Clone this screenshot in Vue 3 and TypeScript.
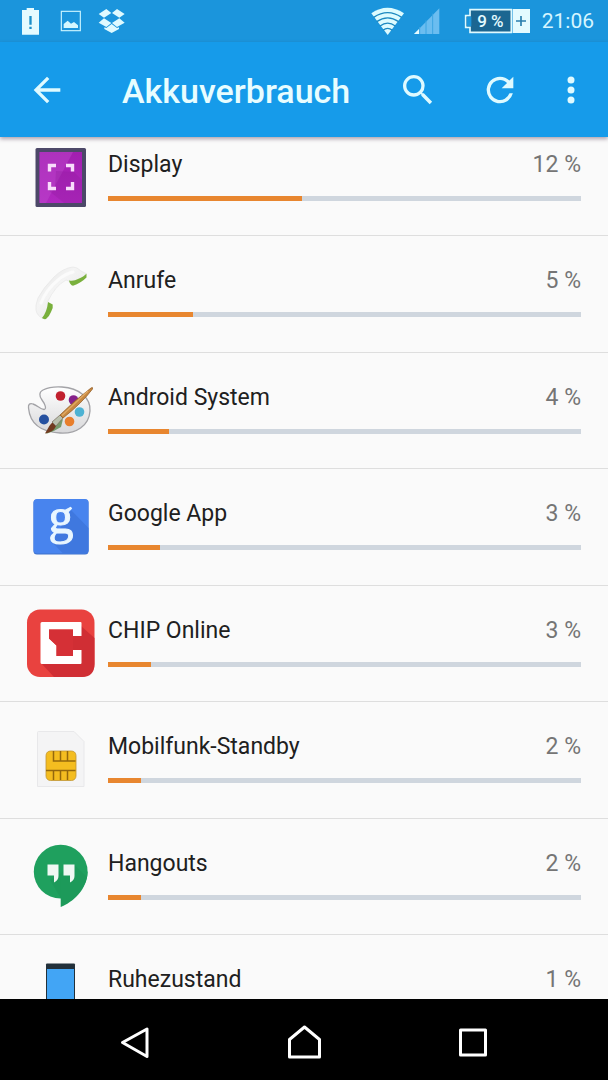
<script setup lang="ts">
interface Consumer {
  id: string
  name: string
  percent: number
  share: number
}

// share: width of the orange bar, relative to the whole track
const consumers: Consumer[] = [
  { id: 'display', name: 'Display', percent: 12, share: 41 },
  { id: 'calls', name: 'Anrufe', percent: 5, share: 18 },
  { id: 'system', name: 'Android System', percent: 4, share: 13 },
  { id: 'google', name: 'Google App', percent: 3, share: 11 },
  { id: 'chip', name: 'CHIP Online', percent: 3, share: 9 },
  { id: 'sim', name: 'Mobilfunk-Standby', percent: 2, share: 7 },
  { id: 'hangouts', name: 'Hangouts', percent: 2, share: 7 },
  { id: 'idle', name: 'Ruhezustand', percent: 1, share: 5 },
]
</script>

<template>
  <div class="screen">
    <div class="status">
      <div class="status-left">
        <svg width="19" height="29" viewBox="63 21 57 87" aria-hidden="true">
          <path d="M66 30H80V24H102V30H117V104H66Z" fill="#e4fbff" />
          <path d="M88 48h7v26h-7zM88 80h7v7h-7z" fill="#1b8fc9" />
        </svg>
        <svg class="picture" width="22" height="22" viewBox="180 30 66 66" aria-hidden="true">
          <rect x="184" y="34" width="57" height="58" fill="none" stroke="#c8f4ff" stroke-width="3.5" />
          <path d="M191 84V72L203 62L213 71L222 66L234 76V84Z" fill="#d4f7ff" />
        </svg>
        <svg width="28" height="26" viewBox="294 24 84 78" aria-hidden="true">
          <path
            d="M319 27L334 39L312 53L296 42ZM351 27L374 42L358 53L336 39ZM312 55L334 69L319 81L296 68ZM358 55L374 68L351 81L336 69ZM335 72L351 84L357 82V87L335 99L313 87V82L319 84Z"
            fill="#dffaff"
          />
        </svg>
      </div>
      <div class="status-right">
        <svg width="34" height="29" viewBox="201 24 102 87" aria-hidden="true">
          <path d="M202 43Q250 10 300 43L251 108Z" fill="#dcfbff" />
          <g fill="none" stroke="#1b88c0" stroke-width="4">
            <path d="M209 55Q251 27 293 55" />
            <path d="M218 68Q251 45 284 68" />
            <path d="M228 81Q251 64 274 81" />
            <path d="M237 94Q251 82 265 94" />
          </g>
        </svg>
        <svg class="signal" width="26" height="26" viewBox="330 27 78 78" aria-hidden="true">
          <path d="M330 105L406 28V105Z" fill="#6bbdf0" />
          <path d="M330 105L346 89V105Z" fill="#e4fbff" />
          <path d="M347 84V105M366 64V105M386 44V105" stroke="#3ba4e2" stroke-width="3" />
        </svg>
        <svg class="battery" width="67" height="26" viewBox="480 24 201 78" role="img" aria-label="Akku 9 %">
          <path d="M498 29H622V97H498V82H485V47H498Z" fill="#1b6691" stroke="#dffaff" stroke-width="5" />
          <path d="M488 50H502V79H488Z" fill="#1b95dc" />
          <rect x="626" y="27" width="52" height="72" fill="#e4fbff" />
          <path d="M636 63H666M651 48V78" stroke="#2a7fae" stroke-width="5" />
          <text x="559" y="81" text-anchor="middle" class="battery-text">9 %</text>
        </svg>
        <time class="clock">21:06</time>
      </div>
    </div>

    <header class="appbar">
      <button type="button" class="action" aria-label="Zurück">
        <svg viewBox="0 0 24 24"><path d="M20 11H7.83l5.59-5.59L12 4l-8 8 8 8 1.41-1.41L7.83 13H20v-2z" /></svg>
      </button>
      <h1>Akkuverbrauch</h1>
      <button type="button" class="action search" aria-label="Suchen">
        <svg viewBox="0 0 24 24"><path d="M15.5 14h-.79l-.28-.27A6.47 6.47 0 0 0 16 9.5 6.5 6.5 0 1 0 9.5 16c1.61 0 3.09-.59 4.23-1.57l.27.28v.79l5 4.99L20.49 19l-4.99-5zm-6 0C7.01 14 5 11.99 5 9.5S7.01 5 9.5 5 14 7.01 14 9.5 11.99 14 9.5 14z" /></svg>
      </button>
      <button type="button" class="action refresh" aria-label="Aktualisieren">
        <svg viewBox="0 0 24 24"><path d="M17.65 6.35A7.96 7.96 0 0 0 12 4a8 8 0 1 0 7.73 10h-2.08A6 6 0 1 1 12 6c1.66 0 3.14.69 4.22 1.78L13 11h7V4l-2.35 2.35z" /></svg>
      </button>
      <button type="button" class="action more" aria-label="Weitere Optionen">
        <svg viewBox="0 0 24 24"><circle cx="12" cy="6" r="2.1" /><circle cx="12" cy="12" r="2.1" /><circle cx="12" cy="18" r="2.1" /></svg>
      </button>
    </header>

    <main class="content">
      <ul class="list">
        <li v-for="item in consumers" :key="item.id" class="row">
          <svg class="icon" viewBox="0 0 80 80" aria-hidden="true">
            <g v-if="item.id === 'display'">
              <defs>
                <linearGradient id="violet" x1="0" y1="0" x2="0" y2="1">
                  <stop offset="0" stop-color="#a21fb0" />
                  <stop offset="1" stop-color="#b028c0" />
                </linearGradient>
              </defs>
              <rect x="15.5" y="10" width="50.5" height="59" rx="1.5" fill="#4c4868" />
              <rect x="19.5" y="14" width="42.5" height="51" fill="url(#violet)" />
              <path d="M19.5 14H53L26 65H19.5Z" fill="#c04fd0" opacity=".4" />
              <path d="M36 33L54 34L62 42V65H44L28 52L35 50Z" fill="#8d1a9b" opacity=".3" />
              <path d="M29.5 33.5V27.5H36M46 27.5H52.5V33.5M52.5 44V50.5H46M36 50.5H29.5V44" fill="none" stroke="#f8dcfb" stroke-width="3.4" />
            </g>

            <g v-else-if="item.id === 'calls'">
              <defs>
                <linearGradient id="handset" x1="0" y1="0" x2="1" y2="1">
                  <stop offset="0" stop-color="#e2e2e2" />
                  <stop offset=".4" stop-color="#f4f4f4" />
                  <stop offset="1" stop-color="#e4e4e4" />
                </linearGradient>
              </defs>
              <path d="M53 13Q57 13 61 17L66 19.5Q66 22 60 25Q54 28 50 27.5L46 26Q35 32 27.5 48L30 50Q28 61 23 64.5Q17 62 16 56Q15 52 18 44Q23 34 34 23Q43 14 53 13Z" fill="url(#handset)" stroke="#e4e4e4" stroke-width=".6" />
              <path d="M21 49Q26 36 38 26Q45 20 53 18" fill="none" stroke="#fbfbfb" stroke-width="3" stroke-linecap="round" />
              <path d="M49 26.5Q54 27.500 58 25Q64 22.500 66.500 19.500V23.500Q61 29 53 31.800Q50 31 49 26.500Z" fill="#79b03c" />
              <path d="M28 48L32.700 50.500Q33.500 54 31 58Q29 63 26 65Q23.500 65.500 22 64Q27 58 28 48Z" fill="#79b03c" />
            </g>

            <g v-else-if="item.id === 'system'">
              <defs>
                <linearGradient id="palette" x1="0" y1="0" x2="0" y2="1">
                  <stop offset="0" stop-color="#ffffff" />
                  <stop offset="1" stop-color="#d8d8da" />
                </linearGradient>
              </defs>
              <path d="M23 19C29 16 35 15.5 42 16C59 17 71 27 70 40C69 55 56 63 40 62C22 61 10 53 8.5 37C8 33 10 32 13 33C17 34 20 38 24 38.5C27 38 25 33 22 29C19 25 19 21 23 19Z" fill="url(#palette)" stroke="#a3a3a7" stroke-width="1.3" />
              <circle cx="40.5" cy="25" r="4.8" fill="#c1202e" />
              <circle cx="53.5" cy="29" r="4.8" fill="#86228b" />
              <circle cx="59.5" cy="41" r="4.8" fill="#4db2d3" />
              <circle cx="49.5" cy="50.5" r="4.8" fill="#e87e2b" />
              <circle cx="24" cy="48.5" r="5" fill="#25509f" />
              <path d="M26 63L34 52L43 48L41 56Q35 60 26 63Z" fill="#4a7e3b" opacity=".7" />
              <path d="M25 62.5C28 58 29 54 33 51L36.500 54C34 60 31 61 25 62.5Z" fill="#713b20" />
              <path d="M32 51L40 44L43 47L36 55Z" fill="#b9c0ae" stroke="#7d7464" stroke-width=".8" />
              <path d="M40 44Q55 29 71 17Q73 15.5 72.5 18Q62 32 43 47Z" fill="#c8883f" stroke="#94602b" stroke-width=".8" />
              <path d="M42 44.500L68 20" stroke="#e0aa66" stroke-width="1.2" />
            </g>

            <g v-else-if="item.id === 'google'">
              <rect x="13.5" y="12.5" width="55" height="55" rx="3.5" fill="#3d70c9" />
              <rect x="13.5" y="12" width="55" height="54.5" rx="3.5" fill="#4884ee" />
              <path d="M51 23L68.5 41V63Q68.5 66.5 65 66.5H43L32 55Z" fill="#3f78df" />
              <text x="41" y="46" text-anchor="middle" class="g-mark">g</text>
            </g>

            <g v-else-if="item.id === 'chip'">
              <rect x="7" y="5.5" width="67.5" height="67.5" rx="13" fill="#e9423f" />
              <path d="M61 22L74.5 34V60Q74.5 73 61.5 73H34L21 59Z" fill="#d02e34" />
              <path d="M22 18H60.5Q61.5 18 61.5 19V32H53V25.5H29V34.5L36.5 41.5V52H53V46H61.5V59Q61.5 60 60.5 60H22Q20.5 60 20.5 58.5V19.5Q20.5 18 22 18Z" fill="#ffffff" />
              <path d="M29 25.5H53V52H36.5V41.5L29 34.5Z" fill="#d53036" />
            </g>

            <g v-else-if="item.id === 'sim'">
              <path d="M18.5 11.5H54L64 21.5V66.5H17.5V12.5Q17.5 11.5 18.5 11.5Z" fill="#f4f4f5" stroke="#e8e8ea" />
              <rect x="26" y="31" width="30" height="29.5" rx="4.5" fill="#f4bd20" stroke="#c09634" stroke-width=".8" />
              <path d="M33.5 31V41H55.5M40.5 31V41M47.5 31V41M26 50.5H55.5M33.5 50.5V60M40.5 50.5V60M47.5 50.5V60" fill="none" stroke="#94680d" stroke-width="1.5" />
            </g>

            <g v-else-if="item.id === 'hangouts'">
              <circle cx="40.7" cy="34.7" r="26.9" fill="#1fa05e" />
              <path d="M67.6 34.7C67.5 52 53 65 40.7 70V34.7Z" fill="#1fa05e" />
              <path d="M38.5 38L43.5 34L54.5 28L67 40C64 55 52 65 41 69.5V61.5L30 43Z" fill="#178650" opacity=".25" />
              <path d="M27.5 27.5H38.5V39Q38.5 43 34 45.5V38.5H27.5ZM43.5 27.5H54.5V39Q54.5 43 50 45.5V38.5H43.5Z" fill="#f0f8f3" />
            </g>

            <g v-else>
              <rect x="26" y="10.5" width="29" height="62" rx="1" fill="#22303a" />
              <rect x="27" y="16" width="27" height="48" fill="#42a5f5" />
            </g>
          </svg>
          <div class="details">
            <div class="labels">
              <span class="name">{{ item.name }}</span>
              <span class="percent">{{ item.percent }} %</span>
            </div>
            <div class="track">
              <div class="fill" :style="{ width: item.share + '%' }"></div>
            </div>
          </div>
        </li>
      </ul>
    </main>

    <nav class="navbar" aria-label="Systemnavigation">
      <button type="button" aria-label="Zurück">
        <svg viewBox="0 0 40 40"><path d="M32 9V36.5L7.5 22.5Z" /></svg>
      </button>
      <button type="button" aria-label="Startseite">
        <svg viewBox="0 0 40 40"><path d="M5.5 19.5L20.5 7L35.5 19.5V37H5.5Z" /></svg>
      </button>
      <button type="button" aria-label="Letzte Apps">
        <svg viewBox="0 0 40 40"><rect x="7.5" y="10" width="25" height="25" /></svg>
      </button>
    </nav>
  </div>
</template>

<style>
body {
  margin: 0;
  background: #fafafa;
}
</style>

<style scoped>
.screen {
  display: flex;
  flex-direction: column;
  height: 100vh;
  background: #fafafa;
  font-family: Roboto, "Liberation Sans", sans-serif;
}

svg {
  display: block;
  flex: none;
}

button {
  display: flex;
  align-items: center;
  justify-content: center;
  padding: 0;
  border: 0;
  background: none;
}

.status {
  display: flex;
  flex: none;
  justify-content: space-between;
  height: 42px;
  padding: 0 14px 0 21px;
  background: #1b95dc;
}

.status-left,
.status-right {
  display: flex;
  align-items: center;
}

.picture {
  margin: 0 16px 0 20px;
}

.signal {
  margin: 0 24px 0 9px;
}

.battery {
  margin-right: 11px;
}

.battery-text {
  font-size: 51px;
  font-weight: 500;
  fill: #e4fbff;
}

.clock {
  font-size: 21px;
  line-height: 24px;
  color: #d6f6ff;
}

.appbar {
  display: flex;
  flex: none;
  align-items: center;
  height: 95px;
  padding: 0 17px 0 27px;
  background: #169bea;
  box-shadow: 0 2px 4px rgba(60, 30, 60, 0.4);
  z-index: 1;
}

.appbar h1 {
  flex: 1;
  margin: 0 0 0 55px;
  padding-top: 2px;
  font-size: 34px;
  font-weight: 500;
  line-height: 40px;
  color: #e8fdff;
}

.action svg {
  width: 40px;
  height: 40px;
  fill: #dffaff;
}

.refresh {
  margin-left: 42px;
}

.more {
  margin-left: 31px;
}

.content {
  flex: 1;
  min-height: 0;
  overflow: hidden;
}

/* The list is scrolled a little way under the app bar. */
.list {
  margin: -17px 0 0;
  padding: 0;
  list-style: none;
}

.row {
  display: flex;
  box-sizing: border-box;
  min-height: 116px;
  padding: 0 27px 0 20px;
  border-bottom: 1px solid #dedede;
}

.row:nth-child(even) {
  min-height: 117px;
}

.icon {
  width: 80px;
  height: 80px;
  margin: 18px 8px 0 0;
}

.g-mark {
  font-family: "Liberation Serif", serif;
  font-size: 50px;
  fill: #e8f6ff;
  stroke: #e8f6ff;
  stroke-width: 1px;
}

.details {
  flex: 1;
  padding-top: 31px;
}

.labels {
  display: flex;
  justify-content: space-between;
  font-size: 23px;
  line-height: 28px;
}

.name {
  color: #202020;
}

.percent {
  color: #757575;
}

.track {
  height: 5px;
  margin-top: 17px;
  background: #cfd6de;
}

.fill {
  height: 100%;
  background: #e8862f;
}

.navbar {
  display: grid;
  flex: none;
  grid-template-columns: repeat(3, 1fr);
  height: 81px;
  padding: 0 50px;
  background: #000000;
}

.navbar svg {
  width: 40px;
  height: 40px;
  fill: none;
  stroke: #ffffff;
  stroke-width: 3px;
  stroke-linejoin: round;
}
</style>
